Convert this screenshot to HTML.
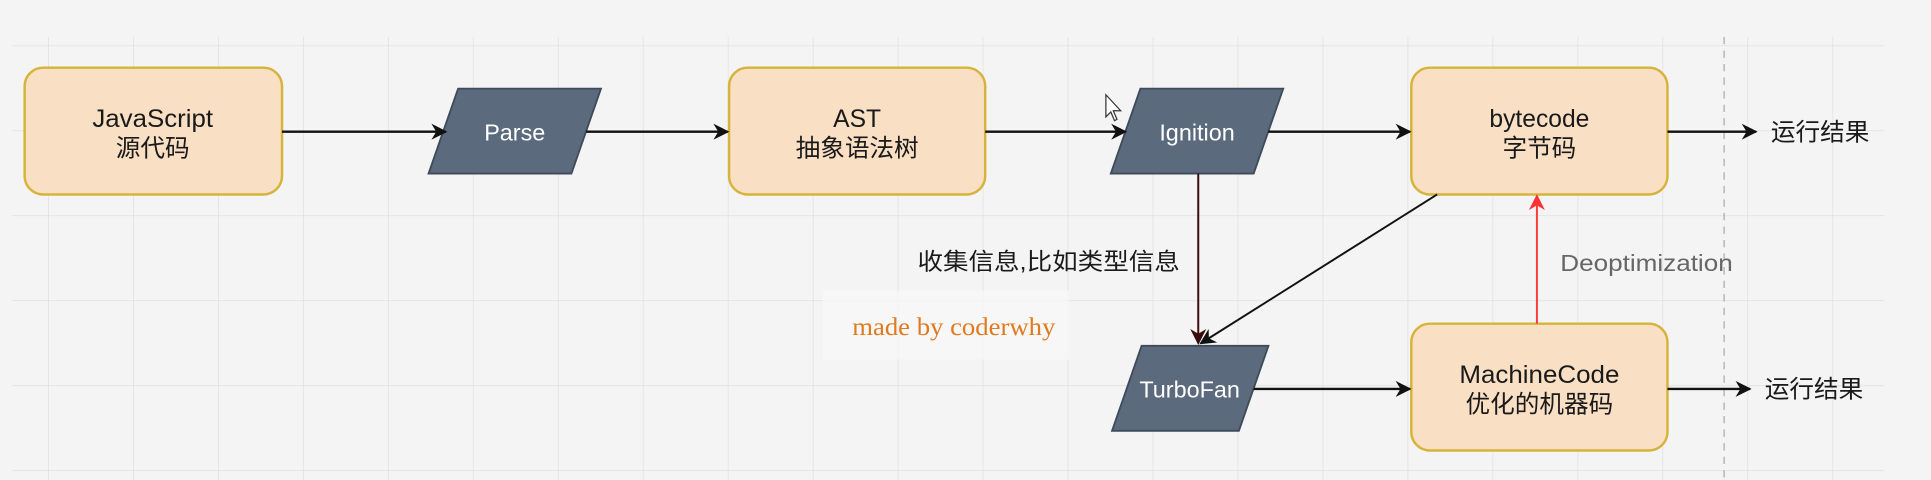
<!DOCTYPE html>
<html><head><meta charset="utf-8"><style>
html,body{margin:0;padding:0;background:#f4f4f4;width:1931px;height:480px;overflow:hidden}
svg{display:block}
text{font-family:"Liberation Sans","Noto Sans CJK SC",sans-serif}
</style></head><body>
<svg width="1931" height="480" viewBox="0 0 1568 390" preserveAspectRatio="none" xmlns="http://www.w3.org/2000/svg">
<defs>
<pattern id="g" x="39" y="37" width="69" height="69" patternUnits="userSpaceOnUse">
<path d="M0 0H69M0 0V69" stroke="#dcdcdc" stroke-width="1" fill="none"/>
</pattern>
<marker id="ab" viewBox="0 0 10 10" refX="9" refY="5" markerWidth="13" markerHeight="13" markerUnits="userSpaceOnUse" orient="auto"><path d="M0 0L10 5L0 10L3 5Z" fill="#111"/></marker>
<marker id="ad" viewBox="0 0 10 10" refX="9" refY="5" markerWidth="13" markerHeight="13" markerUnits="userSpaceOnUse" orient="auto"><path d="M0 0L10 5L0 10L3 5Z" fill="#3a0d0d"/></marker>
<marker id="ar" viewBox="0 0 10 10" refX="9" refY="5" markerWidth="13" markerHeight="13" markerUnits="userSpaceOnUse" orient="auto"><path d="M0 0L10 5L0 10L3 5Z" fill="#ff3030"/></marker>
</defs>
<rect width="1568" height="390" fill="#f4f4f4"/>
<rect x="10" y="30" width="1520" height="360" fill="url(#g)"/>
<line x1="1400" y1="30" x2="1400" y2="390" stroke="#aaa" stroke-dasharray="6,5"/>
<rect x="668" y="236" width="200" height="56" fill="#f7f7f7" opacity="0.8"/>

<g fill="#f9dfc4" stroke="#d6b43c" stroke-width="2">
<rect x="20" y="55" width="209" height="103" rx="15"/>
<rect x="592" y="55" width="208" height="103" rx="15"/>
<rect x="1146" y="55" width="208" height="103" rx="15"/>
<rect x="1146" y="263" width="208" height="103" rx="15"/>
</g>
<g fill="#5b6a7d" stroke="#3e4b5b" stroke-width="1.5">
<path d="M372 72H488L464 141H348Z"/>
<path d="M926 72H1042L1018 141H902Z"/>
<path d="M927 281H1030L1006 350H903Z"/>
</g>

<g stroke="#111" stroke-width="2" fill="none">
<line x1="229" y1="107" x2="362" y2="107" marker-end="url(#ab)"/>
<line x1="476" y1="107" x2="591" y2="107" marker-end="url(#ab)"/>
<line x1="800" y1="107" x2="914" y2="107" marker-end="url(#ab)"/>
<line x1="1030" y1="107" x2="1145" y2="107" marker-end="url(#ab)"/>
<line x1="1354" y1="107" x2="1426" y2="107" marker-end="url(#ab)"/>
<line x1="1018" y1="316" x2="1145" y2="316" marker-end="url(#ab)"/>
<line x1="1354" y1="316" x2="1421" y2="316" marker-end="url(#ab)"/>
<line x1="1167" y1="158" x2="975" y2="279" stroke-width="1.6" marker-end="url(#ab)"/>
</g>
<line x1="973" y1="141" x2="973" y2="279" stroke="#3a0d0d" stroke-width="1.6" marker-end="url(#ad)"/>
<line x1="1248" y1="263" x2="1248" y2="159" stroke="#ff3a3a" stroke-width="1.6" marker-end="url(#ar)"/>

<path d="M898 77V95L902 91L905 98L907 97L904 90H910Z" fill="#fff" stroke="#333" stroke-width="1"/>

<g font-size="20" fill="#1a1a1a" text-anchor="middle">
<text x="124" y="103" textLength="98" lengthAdjust="spacingAndGlyphs">JavaScript</text><text x="124" y="127">源代码</text>
<text x="696" y="103">AST</text><text x="696" y="127">抽象语法树</text>
<text x="1250" y="103">bytecode</text><text x="1250" y="127">字节码</text>
<text x="1250" y="311" textLength="130" lengthAdjust="spacingAndGlyphs">MachineCode</text><text x="1250" y="335">优化的机器码</text>
</g>
<g font-size="19" fill="#fff" text-anchor="middle">
<text x="418" y="114">Parse</text>
<text x="972" y="114">Ignition</text>
<text x="966" y="323">TurboFan</text>
</g>
<text x="1438" y="114" font-size="20" fill="#1a1a1a">运行结果</text>
<text x="1433" y="323" font-size="20" fill="#1a1a1a">运行结果</text>
<text x="745" y="219" font-size="19" fill="#1a1a1a" textLength="213" lengthAdjust="spacingAndGlyphs">收集信息,比如类型信息</text>
<text x="1267" y="220" font-size="19" fill="#666" textLength="140" lengthAdjust="spacingAndGlyphs">Deoptimization</text>
<text x="692" y="272" font-size="21" fill="#e07a1f" style="font-family:'Liberation Serif',serif" textLength="165" lengthAdjust="spacingAndGlyphs">made by coderwhy</text>
</svg>
</body></html>
